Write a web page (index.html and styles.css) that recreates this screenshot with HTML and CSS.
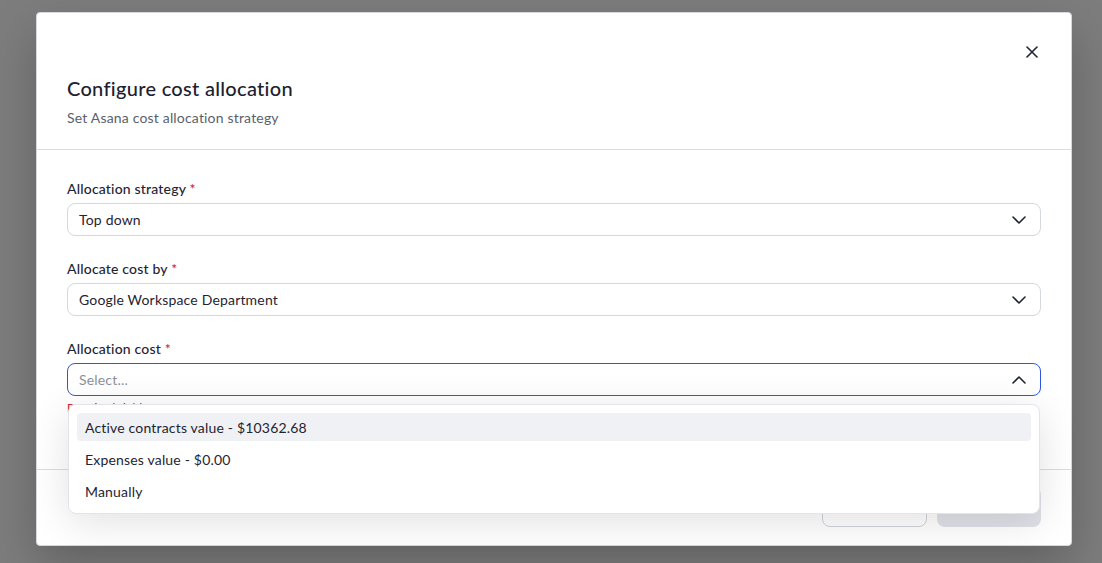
FILE: index.html
```html
<!DOCTYPE html>
<html lang="en">

<head>
  <meta charset="UTF-8" />
  <title>Configure cost allocation</title>
  <meta name="viewport" content="width=device-width, initial-scale=1.0" />
  <link rel="stylesheet" href="styles.css">
</head>

<body>

  <div class="modal">
    <div class="modal-header">
      <div class="close-row">
        <button class="close-btn" aria-label="Close">
          <svg width="12" height="12" viewBox="0 0 12 12" fill="none" stroke="#1f2433" stroke-width="1.6" stroke-linecap="round">
            <path d="M1 1L11 11M11 1L1 11" />
          </svg>
        </button>
      </div>
      <h2 class="modal-title">Configure cost allocation</h2>
      <p class="modal-subtitle">Set Asana cost allocation strategy</p>
    </div>

    <div class="modal-body">
      <div class="field">
        <label>Allocation strategy <span class="req">*</span></label>
        <div class="select">
          <span>Top down</span>
          <svg class="chevron" width="14" height="8" viewBox="0 0 14 8" fill="none" stroke="#1f2433" stroke-width="1.6" stroke-linecap="round" stroke-linejoin="round">
            <path d="M1 1L7 7L13 1" />
          </svg>
        </div>
      </div>

      <div class="field">
        <label>Allocate cost by <span class="req">*</span></label>
        <div class="select">
          <span>Google Workspace Department</span>
          <svg class="chevron" width="14" height="8" viewBox="0 0 14 8" fill="none" stroke="#1f2433" stroke-width="1.6" stroke-linecap="round" stroke-linejoin="round">
            <path d="M1 1L7 7L13 1" />
          </svg>
        </div>
      </div>

      <div class="field last">
        <label>Allocation cost <span class="req">*</span></label>
        <div class="select open">
          <span class="placeholder">Select...</span>
          <svg class="chevron" width="14" height="8" viewBox="0 0 14 8" fill="none" stroke="#1f2433" stroke-width="1.6" stroke-linecap="round" stroke-linejoin="round">
            <path d="M1 7L7 1L13 7" />
          </svg>
        </div>
        <p class="error">Required field</p>

        <ul class="menu">
          <li class="active">Active contracts value - $10362.68</li>
          <li>Expenses value - $0.00</li>
          <li>Manually</li>
        </ul>
      </div>
    </div>

    <div class="modal-footer">
      <button class="btn cancel-btn">Cancel</button>
      <button class="btn save-btn" disabled>Save</button>
    </div>
  </div>

</body>

</html>
```

FILE: styles.css
```css
* {
  margin: 0;
  padding: 0;
  box-sizing: border-box;
  font-family: 'Lato', 'Noto Sans', sans-serif;
  letter-spacing: 0.18px;
}

body {
  background: #7d7d7d;
  height: 563px;
  overflow: hidden;
  padding: 12px 0 0 36px;
}

.modal {
  width: 1036px;
  height: 534px;
  background: white;
  border: 1px solid #d6d8df;
  border-radius: 4px;
  box-shadow: 0 20px 50px rgba(0, 0, 0, 0.22);
  display: flex;
  flex-direction: column;
}

.modal-header {
  padding: 27px 27px 21px 30px;
  border-bottom: 1px solid #dcdde3;
}

.close-row {
  display: flex;
  justify-content: flex-end;
  height: 24px;
}

.close-btn {
  width: 24px;
  height: 24px;
  border: none;
  background: none;
  display: flex;
  align-items: center;
  justify-content: center;
}

.modal-title {
  margin-top: 10px;
  font-size: 20px;
  line-height: 28px;
  font-weight: 500;
  color: #1c2130;
  letter-spacing: 0.3px;
}

.modal-subtitle {
  margin-top: 6px;
  font-size: 14px;
  line-height: 20px;
  color: #5b606d;
}

.modal-body {
  padding: 29px 30px 0 30px;
  flex: 1;
}

.field {
  margin-bottom: 23px;
}

.field.last {
  position: relative;
  margin-bottom: 0;
}

.field label {
  display: block;
  font-size: 14px;
  line-height: 20px;
  font-weight: 500;
  color: #1f2433;
  margin-bottom: 4px;
}

.req {
  color: #c0262d;
}

.select {
  height: 33px;
  border: 1px solid #d6d8e0;
  border-radius: 8px;
  padding: 0 14px 0 11px;
  display: flex;
  align-items: center;
  justify-content: space-between;
  font-size: 14px;
  color: #1f2433;
}

.select.open {
  border-color: #2f55e6;
}

.placeholder {
  color: #8c909b;
}

.error {
  margin-top: 4px;
  font-size: 12px;
  line-height: 16px;
  color: #c0262d;
}

.menu {
  position: absolute;
  top: 65px;
  left: 1px;
  right: 1px;
  list-style: none;
  background: white;
  border: 1px solid #e3e4ea;
  border-radius: 8px;
  padding: 8px 8px 4px;
  box-shadow: 0 8px 40px rgba(0, 0, 0, 0.12);
}

.menu li {
  height: 28px;
  margin-bottom: 4px;
  padding: 0 8px;
  border-radius: 4px;
  display: flex;
  align-items: center;
  font-size: 14px;
  color: #1f2433;
}

.menu li.active {
  background: #f0f1f5;
}

.modal-footer {
  border-top: 1px solid #dcdde3;
  padding: 17px 30px 0;
  height: 76px;
  display: flex;
  justify-content: flex-end;
  gap: 10px;
}

.btn {
  height: 40px;
  padding-bottom: 4px;
  border-radius: 8px;
  font-size: 14px;
  font-weight: 600;
}

.cancel-btn {
  width: 105px;
  background: white;
  border: 1px solid #cfd2da;
  color: #1f2433;
}

.save-btn {
  width: 104px;
  background: #e0e1e8;
  border: none;
  color: #9a9ea9;
}
```
